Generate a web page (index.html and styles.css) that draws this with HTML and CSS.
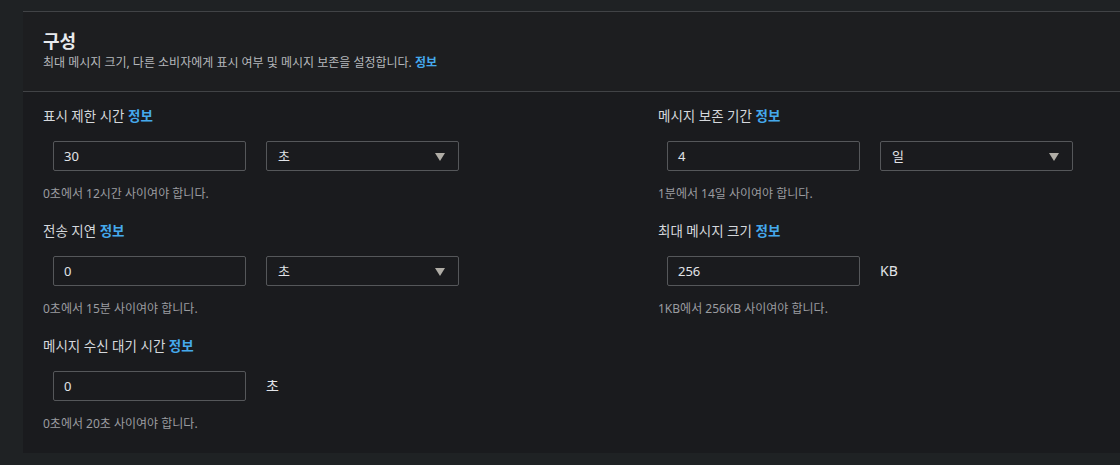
FILE: index.html
```html
<!DOCTYPE html>
<html lang="ko">
<head>
<meta charset="utf-8">
<link rel="stylesheet" href="styles.css">
</head>
<body>
<div class="page">
  <section class="card">
    <header class="card-header">
      <h2 class="title">구성</h2>
      <p class="desc">최대 메시지 크기, 다른 소비자에게 표시 여부 및 메시지 보존을 설정합니다. <a class="info">정보</a></p>
    </header>
    <div class="card-body">
      <div class="col">
        <div class="field">
          <div class="label">표시 제한 시간 <a class="info">정보</a></div>
          <div class="controls">
            <div class="input">30</div>
            <div class="select">초<span class="arrow"></span></div>
          </div>
          <div class="hint">0초에서 12시간 사이여야 합니다.</div>
        </div>
        <div class="field">
          <div class="label">전송 지연 <a class="info">정보</a></div>
          <div class="controls">
            <div class="input">0</div>
            <div class="select">초<span class="arrow"></span></div>
          </div>
          <div class="hint">0초에서 15분 사이여야 합니다.</div>
        </div>
        <div class="field">
          <div class="label">메시지 수신 대기 시간 <a class="info">정보</a></div>
          <div class="controls">
            <div class="input">0</div>
            <div class="unit">초</div>
          </div>
          <div class="hint">0초에서 20초 사이여야 합니다.</div>
        </div>
      </div>
      <div class="col">
        <div class="field">
          <div class="label">메시지 보존 기간 <a class="info">정보</a></div>
          <div class="controls">
            <div class="input">4</div>
            <div class="select">일<span class="arrow"></span></div>
          </div>
          <div class="hint">1분에서 14일 사이여야 합니다.</div>
        </div>
        <div class="field">
          <div class="label">최대 메시지 크기 <a class="info">정보</a></div>
          <div class="controls">
            <div class="input">256</div>
            <div class="unit">KB</div>
          </div>
          <div class="hint">1KB에서 256KB 사이여야 합니다.</div>
        </div>
      </div>
    </div>
  </section>
</div>
</body>
</html>
```

FILE: styles.css
```css
* { box-sizing: border-box; }
html, body { margin: 0; padding: 0; }
body {
  background: #1f2224;
  font-family: "Noto Sans", "Noto Sans CJK KR", sans-serif;
  color: #d5d8dc;
  width: 1120px;
  height: 465px;
  overflow: hidden;
}
.page {
  padding: 11px 0 0 23px;
}
.card {
  width: 1097px;
  background: #1a1b1e;
  border-top: 1px solid #414346;
  overflow: hidden;
}
.card-header {
  background: #1d1e20;
  padding: 17px 20px 14px;
  border-bottom: 1px solid #414346;
  height: 80px;
}
.title {
  margin: 0;
  font-size: 18px;
  font-weight: 700;
  line-height: 24px;
  color: #e8eaed;
}
.desc {
  margin: 2px 0 0;
  font-size: 12px;
  line-height: 16px;
  color: #b5b8bc;
}
.info {
  color: #45a9ec;
  font-weight: 700;
  text-decoration: none;
}
.card-body {
  display: grid;
  grid-template-columns: 615px 1fr;
  padding: 14px 0 0 20px;
  height: 361px;
}
.field {
  margin-bottom: 19px;
}
.field:last-child { margin-bottom: 0; }
.label {
  font-size: 13.5px;
  line-height: 20px;
  color: #d5d8dc;
}
.controls {
  display: flex;
  align-items: center;
  gap: 20px;
  margin: 15px 0 15px 10px;
}
.col + .col .controls {
  margin-left: 9px;
}
.input, .select {
  width: 193px;
  height: 30px;
  border: 1px solid #55575a;
  border-radius: 2px;
  background: #1a1b1e;
  font-size: 13px;
  line-height: 28px;
  padding: 0 10px;
  color: #e1e4e8;
}
.select {
  position: relative;
  padding-left: 11px;
}
.arrow {
  position: absolute;
  right: 13px;
  top: 11px;
  width: 0;
  height: 0;
  border-left: 5.5px solid transparent;
  border-right: 5.5px solid transparent;
  border-top: 8px solid #b0ada6;
}
.unit {
  font-size: 14px;
  color: #e1e4e8;
  line-height: 28px;
}
.hint {
  font-size: 12px;
  line-height: 16px;
  color: #9a9ca0;
}
```
